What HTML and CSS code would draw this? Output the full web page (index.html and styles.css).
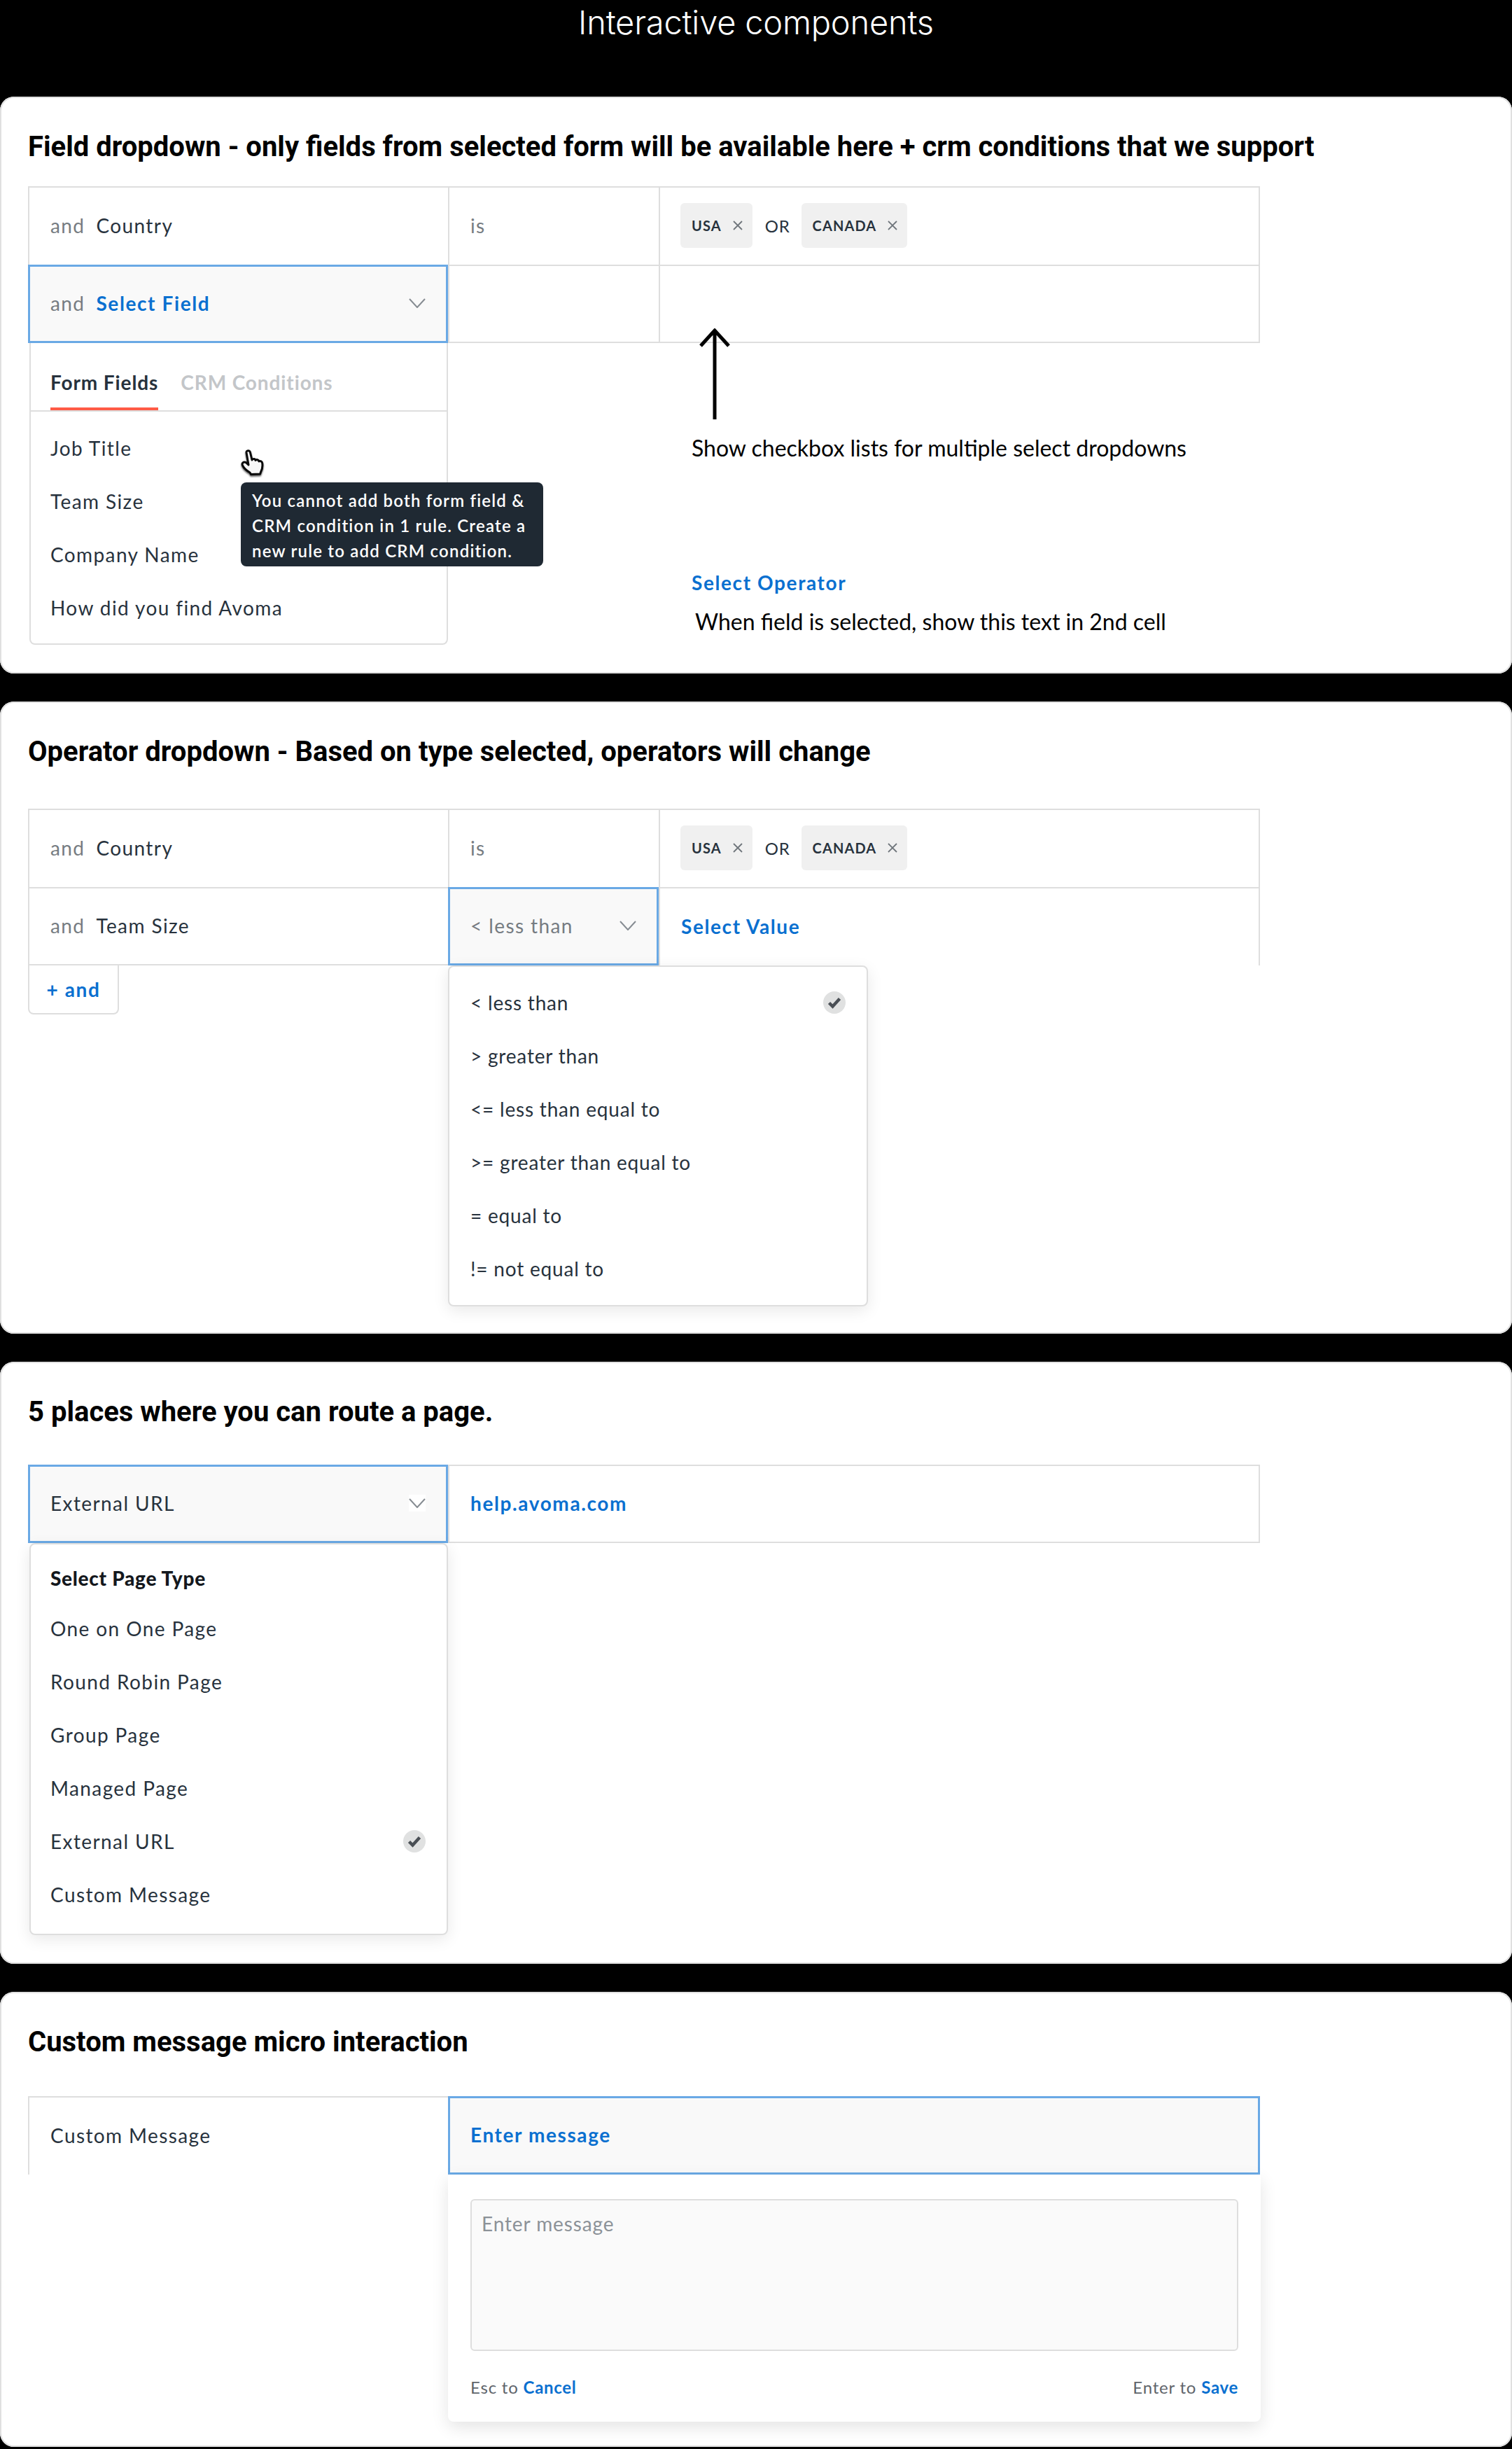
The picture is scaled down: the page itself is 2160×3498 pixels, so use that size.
FILE: index.html
```html
<!DOCTYPE html>
<html lang="en">
<head>
<meta charset="utf-8">
<title>Interactive components</title>
<link rel="stylesheet" href="styles.css">
</head>
<body>
<svg class="defs" width="0" height="0" aria-hidden="true">
  <symbol id="chev" viewBox="0 0 24 14"><polyline points="1,1 12,13 23,1" fill="none" stroke="#868c92" stroke-width="2"/></symbol>
  <symbol id="x" viewBox="0 0 14 14"><path d="M1 1L13 13M13 1L1 13" fill="none" stroke="#6f757b" stroke-width="1.8"/></symbol>
  <symbol id="chk" viewBox="0 0 32 32"><circle cx="16" cy="16" r="16" fill="#e0e1e1"/><polyline points="8.5,16.5 13.5,21.5 23.5,10.5" fill="none" stroke="#4a4f55" stroke-width="4.5"/></symbol>
</svg>
<main class="page">
  <header class="top"><h1>Interactive components</h1></header>

  <section class="card card-field">
    <h2>Field dropdown - only fields from selected form will be available here + crm conditions that we support</h2>
    <div class="rule">
      <div class="row">
        <div class="cell"><span class="and">and</span><span class="val">Country</span></div>
        <div class="cell"><span class="op">is</span></div>
        <div class="cell cell-end">
          <span class="chip">USA<svg class="chip-x"><use href="#x"/></svg></span>
          <span class="or">OR</span>
          <span class="chip">CANADA<svg class="chip-x"><use href="#x"/></svg></span>
        </div>
      </div>
      <div class="row row-last">
        <div class="cell cell-focus"><span class="and">and</span><span class="val link">Select Field</span><svg class="chev"><use href="#chev"/></svg></div>
        <div class="cell"></div>
        <div class="cell cell-end"></div>
      </div>
    </div>
    <div class="below">
      <div class="menu menu-tabs">
        <div class="tabs"><span class="tab tab-on">Form Fields</span><span class="tab">CRM Conditions</span></div>
        <ul class="list">
          <li>Job Title</li>
          <li>Team Size</li>
          <li>Company Name</li>
          <li>How did you find Avoma</li>
        </ul>
        <svg class="hand" viewBox="0 0 34 38" width="34" height="38" aria-hidden="true">
          <path d="M11 22 L8 4.5 C7.6 1 12.6 0.6 13.4 4 L16 15 C17 12.6 20.6 13 21 15.5 C22.4 13.8 25.6 14.6 25.8 17 C27.6 15.8 30.6 17 30.8 20 C31.2 24 31 28 28.6 32 L27.6 35 L14.6 35.6 L13 33 C9 30.6 4.6 27 2.6 23 C0.8 19.8 4 16.6 7.4 18.6 Z" fill="#f7f7f7" stroke="#0a0a0a" stroke-width="3" stroke-linejoin="round"/>
        </svg>
        <div class="tooltip">You cannot add both form field &amp; CRM condition in 1 rule. Create a new rule to add CRM condition.</div>
      </div>
      <div class="notes">
        <svg class="arrow" viewBox="0 0 46 130" width="46" height="130" aria-hidden="true"><path d="M23 130V4M3 25L23 3L43 25" fill="none" stroke="#000" stroke-width="5" stroke-linejoin="miter"/></svg>
        <p class="note note-check">Show checkbox lists for multiple select dropdowns</p>
        <p class="note-link link">Select Operator</p>
        <p class="note note-when">When field is selected, show this text in 2nd cell</p>
      </div>
    </div>
  </section>

  <section class="card card-op">
    <h2>Operator dropdown - Based on type selected, operators will change</h2>
    <div class="rule">
      <div class="row">
        <div class="cell"><span class="and">and</span><span class="val">Country</span></div>
        <div class="cell"><span class="op">is</span></div>
        <div class="cell cell-end">
          <span class="chip">USA<svg class="chip-x"><use href="#x"/></svg></span>
          <span class="or">OR</span>
          <span class="chip">CANADA<svg class="chip-x"><use href="#x"/></svg></span>
        </div>
      </div>
      <div class="row">
        <div class="cell cell-close"><span class="and">and</span><span class="val">Team Size</span></div>
        <div class="cell cell-focus"><span class="op">&lt; less than</span><svg class="chev"><use href="#chev"/></svg></div>
        <div class="cell cell-end cell-open"><span class="link">Select Value</span></div>
      </div>
    </div>
    <div class="below below-op">
      <div class="add link">+ and</div>
      <div class="menu menu-op">
        <ul class="list">
          <li>&lt; less than<svg class="chk"><use href="#chk"/></svg></li>
          <li>&gt; greater than</li>
          <li>&lt;= less than equal to</li>
          <li>&gt;= greater than equal to</li>
          <li>= equal to</li>
          <li>!= not equal to</li>
        </ul>
      </div>
    </div>
  </section>

  <section class="card card-route">
    <h2>5 places where you can route a page.</h2>
    <div class="rule">
      <div class="row row-two row-last">
        <div class="cell cell-focus"><span class="val">External URL</span><svg class="chev chev-box"><use href="#chev"/></svg></div>
        <div class="cell cell-end"><span class="link">help.avoma.com</span></div>
      </div>
    </div>
    <div class="below">
      <div class="menu menu-page">
        <div class="menu-head">Select Page Type</div>
        <ul class="list">
          <li>One on One Page</li>
          <li>Round Robin Page</li>
          <li>Group Page</li>
          <li>Managed Page</li>
          <li>External URL<svg class="chk"><use href="#chk"/></svg></li>
          <li>Custom Message</li>
        </ul>
      </div>
    </div>
  </section>

  <section class="card card-msg">
    <h2>Custom message micro interaction</h2>
    <div class="rule">
      <div class="row row-two">
        <div class="cell cell-top"><span class="val">Custom Message</span></div>
        <div class="cell cell-focus cell-end"><span class="link">Enter message</span></div>
      </div>
    </div>
    <div class="below below-msg">
      <div class="panel">
        <div class="textarea">Enter message</div>
        <div class="panel-foot">
          <span>Esc to <b class="link">Cancel</b></span>
          <span>Enter to <b class="link">Save</b></span>
        </div>
      </div>
    </div>
  </section>
</main>
</body>
</html>
```
FILE: styles.css
```css
* { box-sizing: border-box; }
html, body { margin: 0; padding: 0; background: #000; }
body { font-family: "Lato", "Liberation Sans", sans-serif; font-size: 28px; color: #27323d; letter-spacing: 1.4px; }
.defs { position: absolute; }
ul, p, h1, h2 { margin: 0; padding: 0; }
ul { list-style: none; }

.page { display: flex; flex-direction: column; gap: 40px; }
.top { height: 98px; text-align: center; }
.top h1 { font-family: "Inter", sans-serif; font-weight: 300; font-size: 47px; line-height: 64px; color: #fff; letter-spacing: -0.2px; }

.card { background: #fff; border-radius: 20px; box-shadow: inset 0 0 0 2px #e0e0e0; padding: 48px 40px 0; position: relative; }
.card h2 { font-family: "Roboto", sans-serif; font-weight: 700; font-size: 40px; line-height: 48px; color: #000; letter-spacing: 0; }
.card-field { height: 824px; }
.card-op { height: 903px; }
.card-route { height: 860px; }
.card-msg { height: 650px; }
.card-field .rule { margin-top: 32px; }
.card-op .rule { margin-top: 57px; }
.card-route .rule { margin-top: 51px; }
.card-msg .rule { margin-top: 53px; }

.rule { width: 1760px; }
.row { display: grid; grid-template-columns: 600px 301px 859px; height: 112px; }
.row-two { grid-template-columns: 600px 1160px; }
.cell { display: flex; align-items: center; padding: 0 29px 2px 30px; border-top: 2px solid #dedede; border-left: 2px solid #dedede; }
.cell-end { border-right: 2px solid #dedede; }
.row-last .cell { border-bottom: 2px solid #dedede; }
.cell-close { border-bottom: 2px solid #dedede; }
.cell-focus, .row-last .cell-focus { border: 3px solid #6aa9e5; background: #f9f9f9; padding: 0 29px 2px; }
.cell-end > .chip:first-child { margin-left: -1px; }
.and { color: #767c82; margin-right: 16px; }
.val { color: #27323d; }
.op { color: #767c82; }
.link { color: #0a70d0; font-weight: 700; letter-spacing: 1.6px; }
.chev { width: 24px; height: 14px; margin-left: auto; }
.chev-box { background: #fff; height: 24px; padding: 5px 0; }

.chip { display: inline-flex; align-items: center; height: 64px; padding: 0 14px 0 16px; background: #f0f0f0; border-radius: 6px; font-size: 20px; font-weight: 700; letter-spacing: 1.1px; color: #27323d; text-transform: uppercase; }
.chip-x { width: 14px; height: 14px; margin-left: 16px; }
.or { margin: 0 16px 0 18px; font-size: 24px; letter-spacing: 0.8px; color: #27323d; }

.below { display: flex; position: relative; }
.menu { background: #fff; border: 2px solid #dedede; border-radius: 0 0 8px 8px; position: relative; }
.list li { display: flex; align-items: center; justify-content: space-between; height: 76px; }
.chk { width: 32px; height: 32px; }

.menu-tabs { width: 598px; height: 431px; margin-left: 2px; border-top: 0; }
.tabs { display: flex; gap: 32px; height: 98px; padding: 0 28px; border-bottom: 2px solid #dedede; }
.tab { display: flex; align-items: center; height: 96px; padding-top: 16px; font-size: 28px; font-weight: 700; letter-spacing: 0.9px; color: #c3c6c9; }
.tab-on { color: #27323d; box-shadow: inset 0 -4px 0 #ff5a45; }
.menu-tabs .list { padding: 14px 28px 0; }
.hand { position: absolute; left: 300px; top: 152px; filter: drop-shadow(0 2px 1px rgba(0,0,0,0.6)); }
.tooltip { position: absolute; left: 300px; top: 199px; width: 432px; height: 120px; padding: 8px 6px 0 16px; background: #1f2933; border-radius: 8px; color: #fff; font-size: 24px; font-weight: 600; line-height: 36px; letter-spacing: 1.2px; }

.notes { flex: 1; position: relative; padding-left: 348px; color: #000; }
.arrow { position: absolute; left: 358px; top: -21px; }
.note { font-size: 32px; color: #000; letter-spacing: 0; line-height: 40px; }
.note-check { margin-top: 130px; }
.note-link { margin-top: 152px; line-height: 40px; }
.note-when { margin-top: 16px; margin-left: 5px; }

.below-op { display: block; height: 520px; }
.cell-open { background: #fff; }
.add { display: flex; align-items: center; justify-content: center; width: 130px; height: 70px; background: #fff; border: 2px solid #dedede; border-top: 0; border-radius: 0 0 8px 8px; }
.menu-op { position: absolute; left: 600px; top: 0; width: 600px; height: 487px; border-top-width: 2px; border-radius: 8px; padding: 13px 30px 0; box-shadow: 0 6px 22px rgba(0,0,0,0.09); letter-spacing: 0.8px; }

.menu-page { width: 598px; height: 560px; margin: 0 0 0 2px; border-radius: 8px; padding: 14px 30px 0 28px; box-shadow: 0 6px 22px rgba(0,0,0,0.09); }
.menu-head { font-weight: 900; height: 68px; display: flex; align-items: center; color: #14181d; letter-spacing: 0.7px; }

.below-msg { padding-left: 600px; }
.panel { width: 1161px; height: 353px; background: #fff; border-radius: 0 0 8px 8px; padding: 35px 32px 0; box-shadow: 0 8px 24px rgba(0,0,0,0.11); }
.textarea { height: 217px; background: #fafafa; border: 2px solid #dedede; border-radius: 6px; padding: 16px 14px; color: #8c9298; letter-spacing: 0.9px; }
.panel-foot { display: flex; justify-content: space-between; align-items: center; height: 102px; font-size: 24px; color: #5f656b; letter-spacing: 0.8px; }
.panel-foot .link { letter-spacing: 0.7px; }
```
